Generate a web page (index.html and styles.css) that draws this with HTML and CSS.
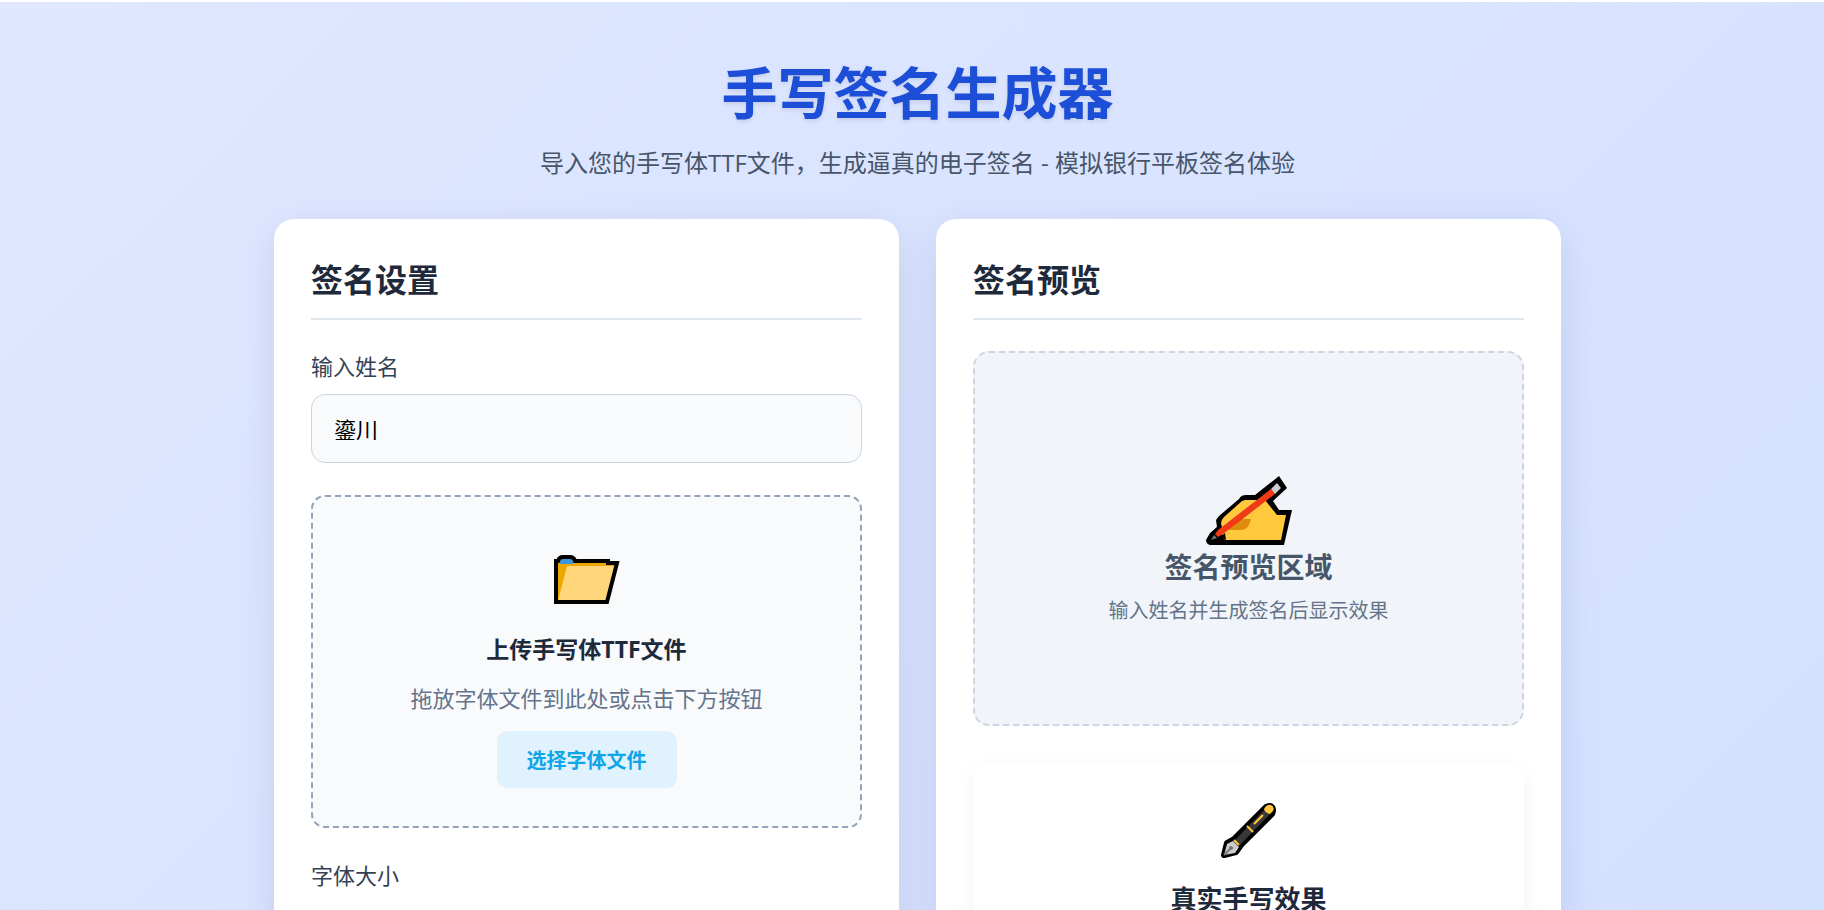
FILE: index.html
```html
<!DOCTYPE html>
<html lang="zh-CN">
<head>
    <meta charset="UTF-8">
    <meta name="viewport" content="width=device-width, initial-scale=1.0">
    <title>手写签名生成器</title>
    <link rel="stylesheet" href="styles.css">
</head>
<body>
    <div class="container">
        <header>
            <h1>手写签名生成器</h1>
            <p class="subtitle">导入您的手写体TTF文件，生成逼真的电子签名 - 模拟银行平板签名体验</p>
        </header>

        <main class="app-container">
            <section class="card">
                <h2 class="section-title">签名设置</h2>

                <div class="input-group">
                    <label for="nameInput">输入姓名</label>
                    <input type="text" id="nameInput" value="鎏川">
                </div>

                <div class="font-upload">
                    <svg class="folder-icon" viewBox="0 0 66 50" aria-hidden="true">
                        <path d="M2 48V6h2q1-4 5-4h7q4 0 5 4h34v2h9L54 48z" fill="#eda500"/>
                        <path d="M6 9V6q0-2 3-2h7q3 0 3 3v2z" fill="#3a96dd"/>
                        <path d="M13 11h48L52 46H4z" fill="#ffd679"/>
                        <path d="M2 47V6h2q1-4 5-4h7q4 0 5 4h33v2h9L53 47z" fill="none" stroke="#000" stroke-width="4"/>
                    </svg>
                    <h3>上传手写体TTF文件</h3>
                    <p>拖放字体文件到此处或点击下方按钮</p>
                    <button type="button" class="upload-btn">选择字体文件</button>
                </div>

                <div class="input-group">
                    <label for="fontSize">字体大小</label>
                    <input type="range" id="fontSize" min="20" max="150" value="80">
                </div>
            </section>

            <section class="card">
                <h2 class="section-title">签名预览</h2>

                <div class="preview-area">
                    <svg class="hand-icon" viewBox="0 0 86 70" aria-hidden="true">
                        <path d="M0 64 4 57l7-6-1-7 3-4 20-17q2-4 7-4h9L73 0l8 12-14 13 6 9h13l-8 35H4q-4-1-4-5z" fill="#000"/>
                        <path d="M18 41 36 25l3-1h20l12 15h9l-5 25H20q-4-1-4-5l2-5q-6-7 0-13z" fill="#ffc83d"/>
                        <path d="M20 54 31 43h14q-2 10-9 11z" fill="#d67d00" fill-opacity=".8"/>
                        <path d="M13 49 16 52 6 63 5 58z" fill="#000"/>
                        <path d="m14 61 5-4 1 7z" fill="#000"/>
                        <path d="m9 58 3-4L65 13l4 5-52 40-5 3z" fill="#f03a17"/>
                        <path d="m65 13 6-6 4 5-6 6z" fill="#ccc"/>
                        <path d="m5 64 3-5 3 3z" fill="#777"/>
                    </svg>
                    <h3>签名预览区域</h3>
                    <p>输入姓名并生成签名后显示效果</p>
                </div>

                <div class="feature">
                    <svg class="pen-icon" viewBox="0 0 56 56" aria-hidden="true">
                        <path d="M3 53 6 41l7-4L45 5q5-2 6 0 2 3 0 7L20 43l-5 7z" fill="#000" stroke="#000" stroke-width="6" stroke-linejoin="round"/>
                        <path d="M13 39 45 6q7-1 5 5L19 43z" fill="#383838"/>
                        <path d="M43 7q3-5 7-4 4 2 2 6l-3 3q-5-1-6-5z" fill="#ffc83d"/>
                        <path d="m33 22 9-9M26 24l6 6M13 38l5 5" fill="none" stroke="#ffc83d" stroke-width="2"/>
                        <path d="M3 53 6 42l6-3 6 6-4 6z" fill="#ccc"/>
                        <path d="m3 53 8-8" stroke="#777" stroke-width="2"/>
                        <circle cx="10" cy="46" r="2" fill="#777"/>
                    </svg>
                    <h3>真实手写效果</h3>
                </div>
            </section>
        </main>
    </div>
</body>
</html>
```
FILE: styles.css
```css
* {
    margin: 0;
    padding: 0;
    box-sizing: border-box;
}

html {
    background: #fff;
}

body {
    min-height: 100vh;
    border-top: 2px solid #fff;
    padding: 48px 0 48px 11px;
    font-family: "Open Sans", "Noto Sans CJK SC", sans-serif;
    color: #1e293b;
    background: linear-gradient(135deg, #e0e7ff 0%, #d2e0ff 100%);
}

.container {
    max-width: 1287px;
    margin: 0 auto;
}

header {
    text-align: center;
    margin-bottom: 38px;
}

h1 {
    font-size: 56px;
    line-height: 84px;
    color: #1d4ed8;
    margin-bottom: 11px;
    text-shadow: 0 2px 4px rgba(0, 0, 0, 0.1);
}

.subtitle {
    font-size: 24px;
    line-height: 36px;
    color: #475569;
}

.app-container {
    display: grid;
    grid-template-columns: 1fr 1fr;
    gap: 37px;
}

.card {
    background: #fff;
    border-radius: 20px;
    padding: 37px;
    box-shadow: 0 10px 40px rgba(0, 0, 80, 0.1);
}

.section-title {
    font-size: 32px;
    line-height: 48px;
    padding-bottom: 14px;
    border-bottom: 2px solid #e2e8f0;
    margin-bottom: 31px;
}

.input-group {
    margin-bottom: 32px;
}

.input-group label {
    display: block;
    font-size: 22px;
    line-height: 30px;
    color: #334155;
    margin-bottom: 13px;
}

.input-group input {
    width: 100%;
}

.input-group input[type="text"] {
    height: 69px;
    padding: 0 22px 2px;
    font-family: inherit;
    font-size: 22px;
    color: #000;
    background: #f8fafc;
    border: 1px solid #cbd5e1;
    border-radius: 14px;
}

.input-group input[type="range"] {
    margin-top: 14px;
}

.font-upload {
    display: flex;
    flex-direction: column;
    align-items: center;
    padding: 58px 37px 38px;
    margin-bottom: 32px;
    background: #f8fafc;
    border: 2px dashed #94a3b8;
    border-radius: 14px;
}

.folder-icon {
    width: 66px;
    height: 50px;
    margin-bottom: 26px;
}

.font-upload h3 {
    font-size: 23px;
    line-height: 36px;
    margin-bottom: 14px;
}

.font-upload p {
    font-size: 22px;
    line-height: 34px;
    color: #64748b;
    margin-bottom: 16px;
}

.upload-btn {
    padding: 13px 30px 11px;
    font-family: inherit;
    font-size: 20px;
    line-height: 33px;
    font-weight: bold;
    color: #0ea5e9;
    background: #e0f2fe;
    border: none;
    border-radius: 10px;
    cursor: pointer;
}

.preview-area {
    display: flex;
    flex-direction: column;
    align-items: center;
    justify-content: center;
    height: 375px;
    padding-top: 24px;
    margin-bottom: 38px;
    background: #f1f5f9;
    border: 2px dashed #cbd5e1;
    border-radius: 16px;
}

.hand-icon {
    width: 86px;
    height: 70px;
}

.preview-area h3 {
    font-size: 28px;
    line-height: 42px;
    color: #475569;
    margin-bottom: 8px;
}

.preview-area p {
    font-size: 20px;
    line-height: 30px;
    color: #64748b;
}

.feature {
    display: flex;
    flex-direction: column;
    align-items: center;
    padding: 38px;
    background: #fff;
    border-radius: 14px;
    box-shadow: 0 5px 20px rgba(0, 0, 0, 0.05);
}

.pen-icon {
    width: 56px;
    height: 56px;
    margin-bottom: 20px;
}

.feature h3 {
    font-size: 26px;
    line-height: 42px;
}
```
